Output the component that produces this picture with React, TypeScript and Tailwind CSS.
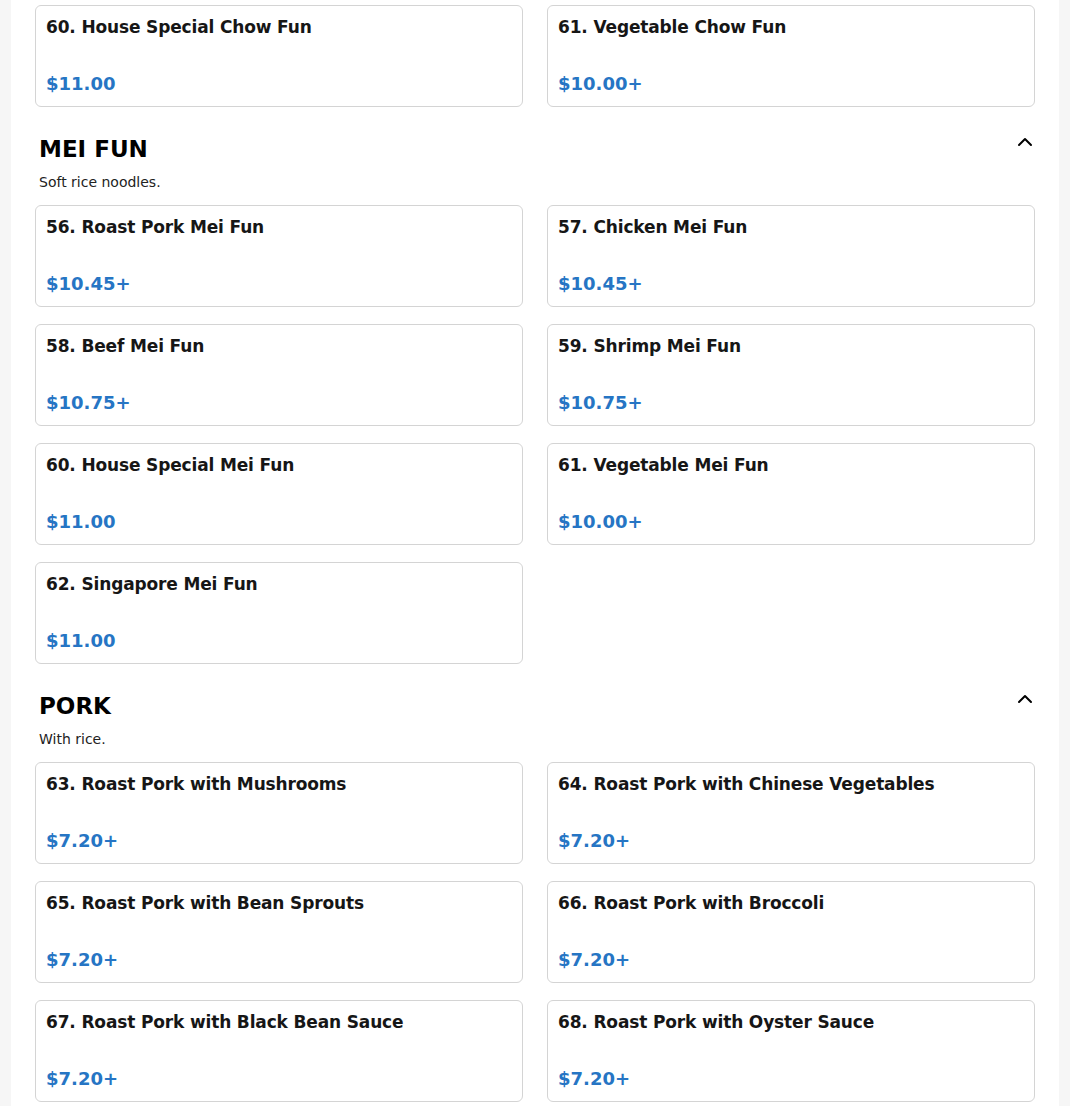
import React from 'react';
import { ChevronUp } from 'lucide-react';

type Item = { name: string; price: string };

const chowFunTail: Item[] = [
  { name: '60. House Special Chow Fun', price: '$11.00' },
  { name: '61. Vegetable Chow Fun', price: '$10.00+' },
];

const sections = [
  {
    title: 'MEI FUN',
    description: 'Soft rice noodles.',
    items: [
      { name: '56. Roast Pork Mei Fun', price: '$10.45+' },
      { name: '57. Chicken Mei Fun', price: '$10.45+' },
      { name: '58. Beef Mei Fun', price: '$10.75+' },
      { name: '59. Shrimp Mei Fun', price: '$10.75+' },
      { name: '60. House Special Mei Fun', price: '$11.00' },
      { name: '61. Vegetable Mei Fun', price: '$10.00+' },
      { name: '62. Singapore Mei Fun', price: '$11.00' },
    ],
  },
  {
    title: 'PORK',
    description: 'With rice.',
    items: [
      { name: '63. Roast Pork with Mushrooms', price: '$7.20+' },
      { name: '64. Roast Pork with Chinese Vegetables', price: '$7.20+' },
      { name: '65. Roast Pork with Bean Sprouts', price: '$7.20+' },
      { name: '66. Roast Pork with Broccoli', price: '$7.20+' },
      { name: '67. Roast Pork with Black Bean Sauce', price: '$7.20+' },
      { name: '68. Roast Pork with Oyster Sauce', price: '$7.20+' },
    ],
  },
];

function MenuCard({ item }: { item: Item }) {
  return (
    <div className="bg-white border border-[#d4d4d4] rounded-md px-[10px] pt-[10px] pb-[11px] cursor-pointer">
      <h3 className="text-[17px] leading-[22px] tracking-[-0.15px] font-bold text-[#161616]">{item.name}</h3>
      <p className="mt-[35px] text-[18px] leading-[22px] font-bold text-[#2675c4]">{item.price}</p>
    </div>
  );
}

function CardGrid({ items }: { items: Item[] }) {
  return (
    <div className="grid grid-cols-2 gap-x-6 gap-y-[17px]">
      {items.map((item) => (
        <MenuCard key={item.name} item={item} />
      ))}
    </div>
  );
}

export default function App() {
  return (
    <div
      className="min-h-screen bg-[#f6f6f6] px-[11px]"
      style={{ fontFamily: '"DejaVu Sans", Verdana, sans-serif' }}
    >
      <div className="bg-white px-6 pt-[5px] pb-10">
        {/* tail of the previous section */}
        <CardGrid items={chowFunTail} />

        {sections.map((section) => (
          <section key={section.title} className="mt-[27px]">
            {/* Section header */}
            <div className="flex items-start justify-between px-1">
              <h2 className="text-[23px] leading-[31px] font-bold text-black">{section.title}</h2>
              <ChevronUp className="w-6 h-6 mt-[-4px] mr-[-6px] text-black" strokeWidth={2} />
            </div>
            <p className="mt-[7px] mb-[13px] px-1 text-[14px] leading-5 text-[#222]">{section.description}</p>
            <CardGrid items={section.items} />
          </section>
        ))}
      </div>
    </div>
  );
}
